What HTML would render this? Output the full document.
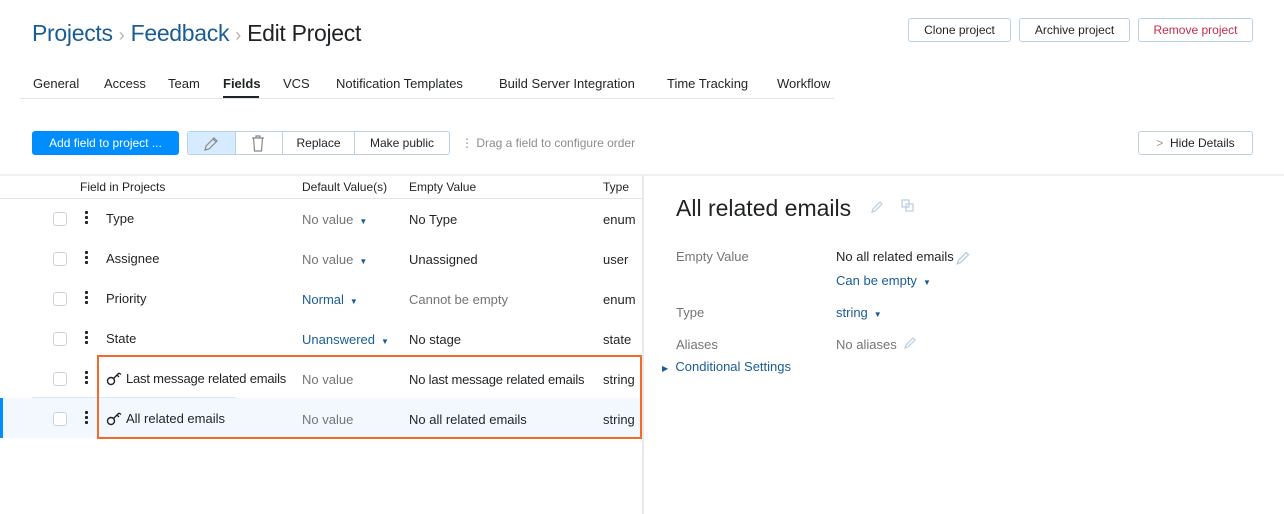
<!DOCTYPE html>
<html><head><meta charset="utf-8"><style>
*{margin:0;padding:0;box-sizing:border-box}
body{width:1284px;height:514px;background:#fff;font-family:"Liberation Sans",sans-serif;font-size:13px;color:#1f2326;position:relative;overflow:hidden}
.a{position:absolute;white-space:nowrap}
.btn{position:absolute;border:1px solid #b8d1e5;border-radius:3px;height:24px;line-height:22px;text-align:center;font-size:12px;color:#1f2326;background:#fff}
.g{color:#737577}
.b{color:#1a5d95}
.cb{position:absolute;width:14px;height:14px;border:1px solid #c8d3dd;border-radius:3px;background:#fff}
.dots{position:absolute;width:3px}
.dots i{display:block;width:3px;height:3px;background:#1f2326;margin-bottom:2px;border-radius:1px}
.car{font-size:8px;margin-left:6px}
</style></head><body>
<div class="a" style="left:32px;top:20px;font-size:23px;color:#1a5d95;letter-spacing:-0.3px">Projects <span style="color:#b0b3b5;font-size:18px">›</span> Feedback <span style="color:#b0b3b5;font-size:18px">›</span> <span style="color:#1f2326">Edit Project</span></div>
<div class="btn" style="left:908px;top:18px;width:103px">Clone project</div>
<div class="btn" style="left:1019px;top:18px;width:111px">Archive project</div>
<div class="btn" style="left:1138px;top:18px;width:115px;color:#c22d4a">Remove project</div>

<div class="a" style="left:33px;top:76px">General</div>
<div class="a" style="left:104px;top:76px">Access</div>
<div class="a" style="left:168px;top:76px">Team</div>
<div class="a" style="left:223px;top:76px;font-weight:bold">Fields</div>
<div class="a" style="left:223px;top:96px;width:36px;height:3px;background:#1f2326"></div>
<div class="a" style="left:283px;top:76px">VCS</div>
<div class="a" style="left:336px;top:76px">Notification Templates</div>
<div class="a" style="left:499px;top:76px">Build Server Integration</div>
<div class="a" style="left:667px;top:76px">Time Tracking</div>
<div class="a" style="left:777px;top:76px">Workflow</div>
<div class="a" style="left:20px;top:98px;width:814px;height:1px;background:#dfe5eb"></div>

<div class="a" style="left:32px;top:131px;width:147px;height:24px;background:#008eff;border-radius:3px;color:#fff;font-size:12px;line-height:24px;text-align:center">Add field to project ...</div>
<div class="a" style="left:187px;top:131px;width:263px;height:24px;border:1px solid #b8d1e5;border-radius:3px"></div>
<div class="a" style="left:188px;top:132px;width:47px;height:22px;background:#d6ebff"></div>
<div class="a" style="left:235px;top:132px;width:1px;height:22px;background:#b8d1e5"></div>
<div class="a" style="left:282px;top:132px;width:1px;height:22px;background:#b8d1e5"></div>
<div class="a" style="left:354px;top:132px;width:1px;height:22px;background:#b8d1e5"></div>
<svg class="a" style="left:202px;top:135px" width="18" height="18" viewBox="0 0 18 18" fill="none" stroke="#888" stroke-width="1.2"><path d="M3 15l1-4 8-8 3 3-8 8z M11 4l3 3"/></svg>
<svg class="a" style="left:250px;top:135px" width="16" height="17" viewBox="0 0 16 17" fill="none" stroke="#888" stroke-width="1.2"><path d="M2 3h12M6 3V1h4v2M3.5 3l1 13h7l1-13"/></svg>
<div class="a" style="left:283px;top:136px;width:71px;text-align:center;font-size:12px">Replace</div>
<div class="a" style="left:355px;top:136px;width:94px;text-align:center;font-size:12px">Make public</div>
<div class="a g" style="left:461px;top:136px;font-size:12px;color:#8a8d90">⋮ Drag a field to configure order</div>
<div class="btn" style="left:1138px;top:131px;width:115px"><span style="color:#999">&gt;</span>&nbsp; Hide Details</div>

<div class="a" style="left:0;top:174px;width:1284px;height:2px;background:#eef1f4"></div>
<div class="a" style="left:642px;top:175px;width:2px;height:339px;background:#e6eaee"></div>

<div class="a" style="left:80px;top:180px;font-size:12px">Field in Projects</div>
<div class="a" style="left:302px;top:180px;font-size:12px">Default Value(s)</div>
<div class="a" style="left:409px;top:180px;font-size:12px">Empty Value</div>
<div class="a" style="left:603px;top:180px;font-size:12px">Type</div>
<div class="a" style="left:0;top:198px;width:642px;height:1px;background:#dfe5eb"></div>

<div class="a" style="left:0;top:398px;width:642px;height:40px;background:#f2f8fd"></div>
<div class="a" style="left:0;top:398px;width:3px;height:40px;background:#008eff"></div>
<div class="a" style="left:32px;top:397px;width:204px;height:1px;background:#d6e8f8"></div>

<div class="cb" style="left:53px;top:212px"></div><div class="dots" style="left:85px;top:211px"><i></i><i></i><i></i></div>
<div class="a" style="left:106px;top:211px">Type</div><div class="a g" style="left:302px;top:212px">No value<span class="car b">▼</span></div><div class="a" style="left:409px;top:212px">No Type</div><div class="a" style="left:603px;top:212px">enum</div>

<div class="cb" style="left:53px;top:252px"></div><div class="dots" style="left:85px;top:251px"><i></i><i></i><i></i></div>
<div class="a" style="left:106px;top:251px">Assignee</div><div class="a g" style="left:302px;top:252px">No value<span class="car b">▼</span></div><div class="a" style="left:409px;top:252px">Unassigned</div><div class="a" style="left:603px;top:252px">user</div>

<div class="cb" style="left:53px;top:292px"></div><div class="dots" style="left:85px;top:291px"><i></i><i></i><i></i></div>
<div class="a" style="left:106px;top:291px">Priority</div><div class="a b" style="left:302px;top:292px">Normal<span class="car">▼</span></div><div class="a g" style="left:409px;top:292px">Cannot be empty</div><div class="a" style="left:603px;top:292px">enum</div>

<div class="cb" style="left:53px;top:332px"></div><div class="dots" style="left:85px;top:331px"><i></i><i></i><i></i></div>
<div class="a" style="left:106px;top:331px">State</div><div class="a b" style="left:302px;top:332px">Unanswered<span class="car">▼</span></div><div class="a" style="left:409px;top:332px">No stage</div><div class="a" style="left:603px;top:332px">state</div>

<div class="cb" style="left:53px;top:372px"></div><div class="dots" style="left:85px;top:371px"><i></i><i></i><i></i></div>
<svg class="a" style="left:106px;top:370px" width="18" height="16" viewBox="0 0 18 16" fill="none" stroke="#1f2326" stroke-width="1.4"><circle cx="5" cy="11" r="3.5"/><path d="M7.5 8.5L13 3M11 5l2 2M13 3l2 1.5"/></svg>
<div class="a" style="left:126px;top:371px;letter-spacing:-0.2px">Last message related emails</div><div class="a g" style="left:302px;top:372px">No value</div><div class="a" style="left:409px;top:372px;letter-spacing:-0.2px">No last message related emails</div><div class="a" style="left:603px;top:372px">string</div>

<div class="cb" style="left:53px;top:412px"></div><div class="dots" style="left:85px;top:411px"><i></i><i></i><i></i></div>
<svg class="a" style="left:106px;top:410px" width="18" height="16" viewBox="0 0 18 16" fill="none" stroke="#1f2326" stroke-width="1.4"><circle cx="5" cy="11" r="3.5"/><path d="M7.5 8.5L13 3M11 5l2 2M13 3l2 1.5"/></svg>
<div class="a" style="left:126px;top:411px">All related emails</div><div class="a g" style="left:302px;top:412px">No value</div><div class="a" style="left:409px;top:412px">No all related emails</div><div class="a" style="left:603px;top:412px">string</div>

<div class="a" style="left:97px;top:355px;width:545px;height:84px;border:2px solid #f26b2a"></div>

<div class="a" style="left:676px;top:195px;font-size:23px">All related emails</div>
<svg class="a" style="left:870px;top:198px" width="16" height="16" viewBox="0 0 16 16" fill="none" stroke="#b8cde0" stroke-width="1.2"><path d="M2 14l1-3 7-7 2 2-7 7z"/></svg>
<svg class="a" style="left:900px;top:198px" width="16" height="16" viewBox="0 0 16 16" fill="none" stroke="#b8cde0" stroke-width="1.2"><rect x="2" y="2" width="7" height="7"/><rect x="6" y="6" width="7" height="7"/></svg>
<div class="a g" style="left:676px;top:249px">Empty Value</div>
<div class="a" style="left:836px;top:249px">No all related emails</div>
<svg class="a" style="left:955px;top:248px" width="18" height="18" viewBox="0 0 16 16" fill="none" stroke="#b8cde0" stroke-width="1.2"><path d="M2 14l1-3 7-7 2 2-7 7z"/></svg>
<div class="a b" style="left:836px;top:273px">Can be empty<span class="car">▼</span></div>
<div class="a g" style="left:676px;top:305px">Type</div>
<div class="a b" style="left:836px;top:305px">string<span class="car">▼</span></div>
<div class="a g" style="left:676px;top:337px">Aliases</div>
<div class="a g" style="left:836px;top:337px">No aliases</div>
<svg class="a" style="left:903px;top:334px" width="16" height="16" viewBox="0 0 16 16" fill="none" stroke="#b8cde0" stroke-width="1.2"><path d="M2 14l1-3 7-7 2 2-7 7z"/></svg>
<div class="a b" style="left:662px;top:359px"><span style="font-size:8px">▶</span>&nbsp; Conditional Settings</div>
</body></html>
